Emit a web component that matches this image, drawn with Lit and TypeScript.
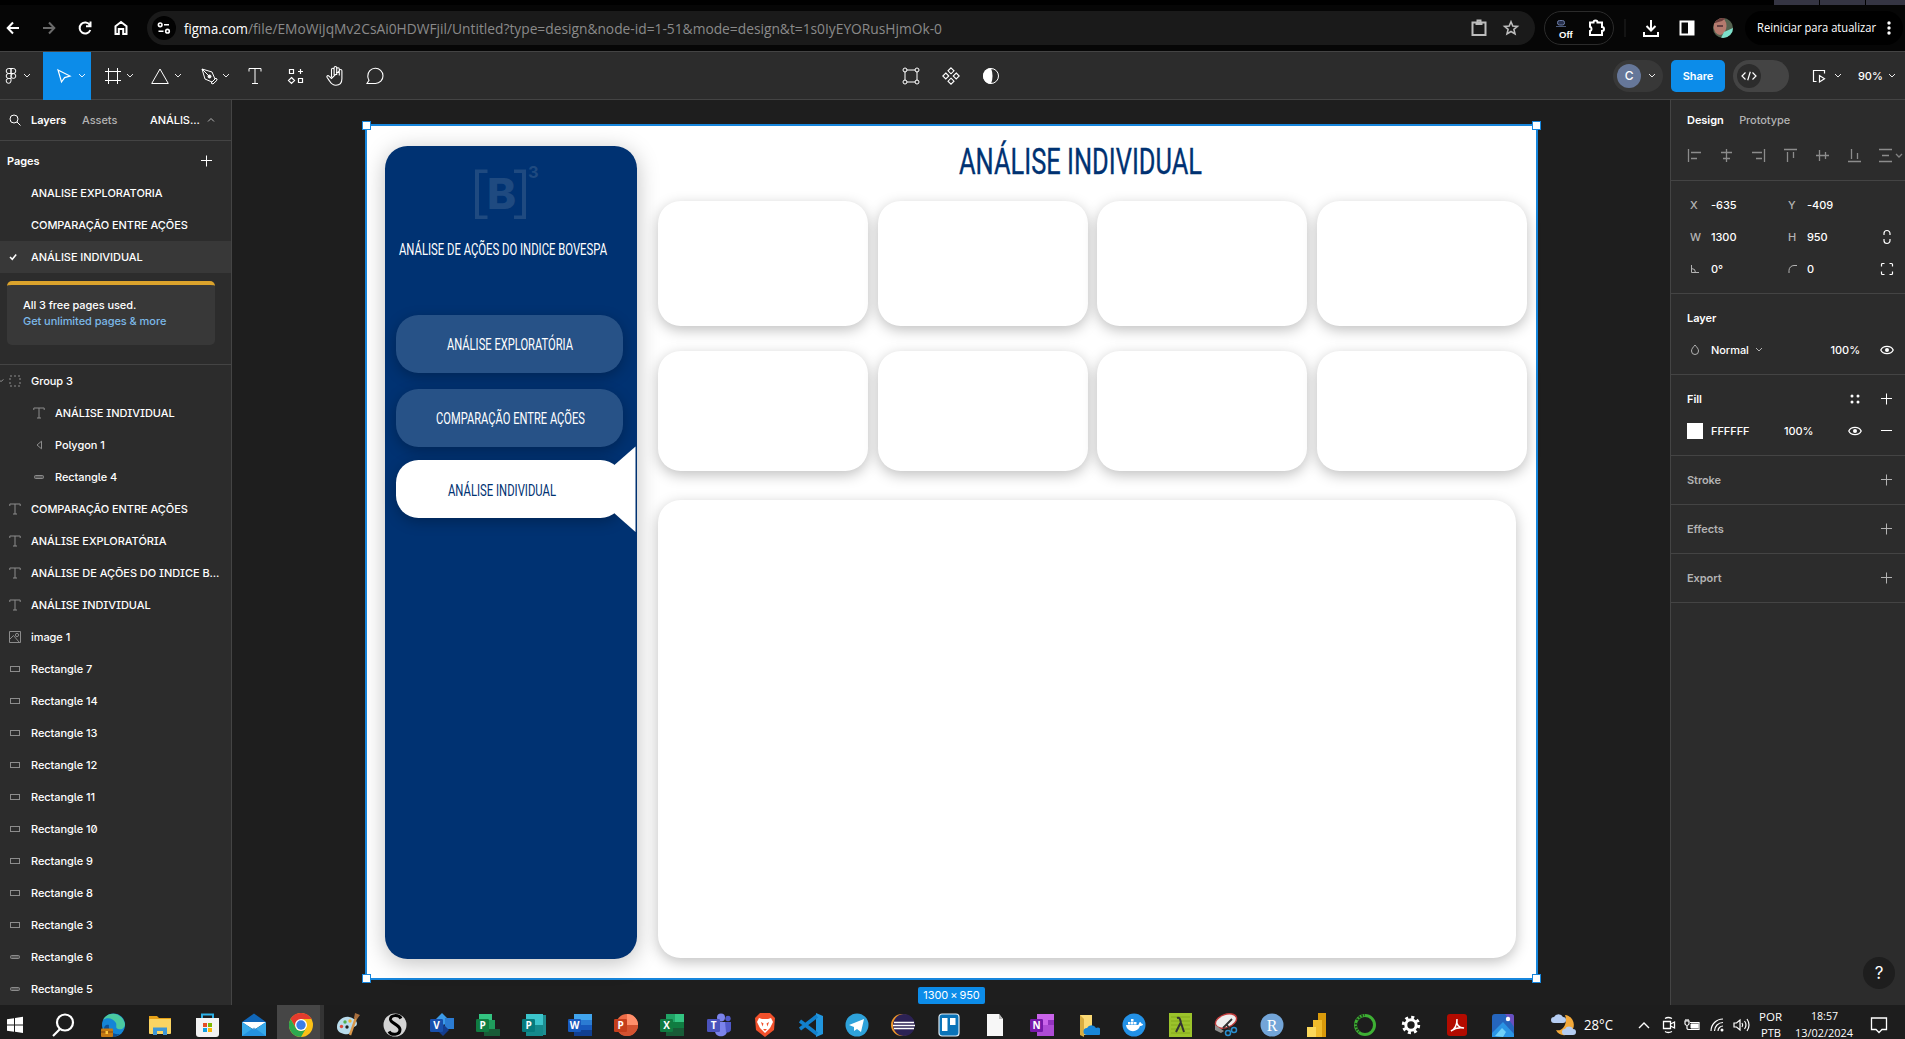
import { LitElement, html, svg, css } from "lit";
import { customElement } from "lit/decorators.js";

/* ---------- helpers ---------- */

/** Square line icon drawn on its own pixel grid. */
const icon = (w: number, h: number, body: unknown, cls = "ic") =>
  html`<svg class=${cls} width=${w} height=${h} viewBox="0 0 ${w} ${h}">${body}</svg>`;

/** Text set to an exact advance width. */
const fit = (text: string, width: number, size: number, cls: string, height = 24, base = 18) =>
  html`<svg class="fit ${cls}" width=${width} height=${height}>
    <text x="0" y=${base} font-size=${size} textLength=${width} lengthAdjust="spacingAndGlyphs">${text}</text>
  </svg>`;

const chevron = icon(8, 6, svg`<path d="M1 1l3 3 3-3"/>`, "ic chev");
const plus = icon(12, 12, svg`<path d="M5.500 .5v11M0 5.500h11"/>`);
const eye = icon(14, 10, svg`<path stroke-width="1.3" d="M.8 5C3 .2 11 .2 13.2 5 11 9.8 3 9.8.8 5z"/><circle cx="7" cy="5" r="2" fill="currentColor" stroke="none"/>`);

/* ---------- toolbar icons ---------- */

const tFigma = icon(12, 18, svg`<path d="M6 1.5H3.7a2.4 2.4 0 000 5H6zM6 1.5h2.3a2.4 2.4 0 010 5H6zM6 6.500H3.700a2.400 2.400 0 000 5H6zM3.700 11.500a2.400 2.400 0 102.300 2.400v-2.400z"/><circle cx="8.400" cy="9" r="2.400"/>`);
const tMove = icon(16, 18, svg`<path stroke-width="1.2" d="M2 3l12 6-5.400 1.600L5.500 15z"/>`);
const tFrame = icon(18, 18, svg`<path d="M4.500 1v16M13.500 1v16M1 4.500h16M1 13.500h16"/>`);
const tShape = icon(20, 18, svg`<path d="M10 2L18.300 16.500H1.700z"/>`);
const tPen = icon(18, 18, svg`<path d="M2 2l10 3 3 7-3 3-7-3zM2 2l7 7M11 16l5-5 1.200 2-4.200 4z"/><circle cx="9.500" cy="9.500" r="1.500" fill="currentColor"/>`);
const tText = icon(16, 18, svg`<path d="M2 4.500V1.500h12v3M8 1.500v15M5 16.500h6"/>`);
const tRes = icon(18, 18, svg`<path stroke-width="1.2" d="M3.500 2.500h4v4h-4zM12.500 11.500h4v4h-4zM14.500 2v5M12 4.500h5M5.500 10.500l3 3-3 3-3-3z"/>`);
const tHand = icon(20, 22, svg`<path stroke-width="1.1" d="M6.500 12V4.600a1.300 1.300 0 012.600 0V10M9.100 5V2.800a1.300 1.300 0 012.600 0V10M11.700 4a1.300 1.300 0 012.600 0v6.500M14.300 5.800a1.300 1.300 0 012.600 0v8c0 4-2.400 6.500-6 6.500-3.300 0-4.800-1.600-6.300-4.200L2 12.300c-.6-1.300.9-2.200 2-1.200l2.500 2.400z"/>`);
const tComment = icon(20, 18, svg`<path stroke-width="1.1" d="M2 16.500h8.500a7.600 7.600 0 10-7.700-7.300c0 1.700.4 2.800 1.200 4.100z"/>`);
const tEdit = icon(18, 18, svg`<path d="M4.500 3h9M4.500 15h9M3 4.500v9M15 4.500v9"/><circle cx="3" cy="3" r="2"/><circle cx="15" cy="3" r="2"/><circle cx="3" cy="15" r="2"/><circle cx="15" cy="15" r="2"/>`);
const tComp = icon(18, 18, svg`<path stroke-width="1.1" d="M9 .8l3 3-3 3-3-3zM9 11.200l3 3-3 3-3-3zM3.800 6l3 3-3 3-3-3zM14.200 6l3 3-3 3-3-3z"/>`);
const tMask = icon(18, 18, svg`<circle cx="9" cy="9" r="7.500"/><path d="M9 1a8 8 0 000 16c2-5 2-11 0-16z" fill="currentColor" stroke="none"/>`);

const tools: [unknown, boolean, boolean][] = [
  [tFigma, true, false], [tMove, true, true], [tFrame, true, false], [tShape, true, false], [tPen, true, false],
  [tText, false, false], [tRes, false, false], [tHand, false, false], [tComment, false, false],
];

/* ---------- layers ---------- */

const glyph: Record<string, unknown> = {
  group: icon(12, 12, svg`<path stroke-dasharray="2 2" d="M1 1h10v10H1z"/><path d="M-10.500 4.500l2.500 2 2.500-2"/>`),
  text: icon(12, 12, svg`<path d="M.8 3V1h10.400v2M6 1v10M4 11h4"/>`),
  poly: icon(12, 12, svg`<path d="M8.500 2.200v7.600L4 6z"/>`),
  thin: icon(12, 12, svg`<rect x="1.500" y="4.500" width="9" height="3" rx="1" fill="#555"/>`),
  rect: icon(12, 12, svg`<rect x="1.500" y="3.500" width="9" height="5"/>`),
  image: icon(12, 12, svg`<path d="M.5.5h11v11H.5zM1 8l3.500-3.500L10 11"/><circle cx="8" cy="4" r="1.600"/>`),
};
const layers: [string, string, boolean?][] = [
  ["group", "Group 3"], ["text", "ANÁLISE INDIVIDUAL", true], ["poly", "Polygon 1", true], ["thin", "Rectangle 4", true],
  ["text", "COMPARAÇÃO ENTRE AÇÕES"], ["text", "ANÁLISE EXPLORATÓRIA"], ["text", "ANÁLISE DE AÇÕES DO INDICE B..."],
  ["text", "ANÁLISE INDIVIDUAL"], ["image", "image 1"], ["rect", "Rectangle 7"], ["rect", "Rectangle 14"],
  ["rect", "Rectangle 13"], ["rect", "Rectangle 12"], ["rect", "Rectangle 11"], ["rect", "Rectangle 10"],
  ["rect", "Rectangle 9"], ["rect", "Rectangle 8"], ["rect", "Rectangle 3"], ["thin", "Rectangle 6"], ["thin", "Rectangle 5"],
];

/* ---------- align icons ---------- */
const aligns = [
  svg`<path d="M1.500 1v13M4 4.500h10M4 10.500h6" />`,
  svg`<path d="M7.500 1v13M2 4.500h11M4 10.500h7" />`,
  svg`<path d="M13.500 1v13M1 4.500h10M5 10.500h6" />`,
  svg`<path d="M1 1.500h13M4.500 4v10M10.500 4v6" />`,
  svg`<path d="M1 7.500h13M4.500 2v11M10.500 4v7" />`,
  svg`<path d="M1 13.500h13M4.500 1v10M10.500 5v6" />`,
];

/* ---------- taskbar icons, 24 x 24 ---------- */
const task = (body: unknown) => html`<svg width="24" height="24" viewBox="0 0 24 24">${body}</svg>`;
const tile = (letter: string, fill: string) => svg`<rect x="0" y="6" width="13" height="13" rx="1.200" fill=${fill}/>
  <text x="6.500" y="16" class="tl" font-size="10">${letter}</text>`;
const apps = [
  svg`<path fill="#fff" d="M4 6.200l7-1v6.300H4zM12 5l8-1.200v7.700h-8zM4 12.500h7v6.300l-7-1zM12 12.500h8V20l-8-1.200z"/>`,
  svg`<circle cx="14" cy="9.500" r="8" fill="none" stroke="#fff" stroke-width="2.200"/><path d="M9 16l-7 7" stroke="#fff" stroke-width="2.200"/>`,
  svg`<circle cx="12.500" cy="12" r="11.500" fill="#1485d6"/><path fill="#4ac9a0" d="M2 7C6-2 21-2 24 11c0 4-3 6-7 5-3-1-1-3-2-6C12 5 6 4 2 7z"/><path fill="#0c4f94" d="M8 12c-1 6 4 10 11 9-6 5-15 2-16-5 0-3 2-5 5-4z"/><rect x="0" y="15.500" width="12" height="8.500" rx="1" fill="#c47913"/><path d="M0 19h12" stroke="#7c4510"/><rect x="4.500" y="18" width="2.500" height="3" fill="#ffc83d"/>`,
  svg`<path fill="#e6a117" d="M1 3h8l2 2h12v5H1z"/><rect x="1" y="6" width="22" height="15" rx="1" fill="#fbd462"/><path fill="#3f97d6" d="M5 22v-7.500h14V22h-4v-4H9v4z"/>`,
  svg`<path d="M7 6V1.500h11V6" fill="none" stroke="#2cb1e8" stroke-width="2"/><path fill="#f3f3f3" d="M1 5h23v16a3 3 0 01-3 3H4a3 3 0 01-3-3z"/><path fill="#e44e25" d="M8 10h4v4H8z"/><path fill="#7db700" d="M13 10h4v4h-4z"/><path fill="#12a0e0" d="M8 15h4v4H8z"/><path fill="#fdb807" d="M13 15h4v4h-4z"/>`,
  svg`<path fill="#1066b8" d="M0 9L12 .5 24 9v4H0z"/><path fill="#fff" d="M0 9h24L12 17z"/><path fill="#37a9ea" d="M0 9l12 8 12-8v14H0z"/><path fill="#1d87d8" d="M0 23l12-8.500L24 23z" opacity=".7"/>`,
  svg`<circle cx="12" cy="12" r="12" fill="#fbc116"/><path fill="#e33b2e" d="M1.600 6A12 12 0 0122.400 6H12a6 6 0 00-5.300 3.300z"/><path fill="#e33b2e" d="M1.600 6l5.300 9L12 6z"/><path fill="#2da94f" d="M1.600 6A12 12 0 0012 24l5.200-9A6 6 0 016.800 15z"/><circle cx="12" cy="12" r="6" fill="#fff"/><circle cx="12" cy="12" r="4.700" fill="#3a7de8"/>`,
  svg`<path fill="#b9dcec" d="M1 14C1 8 7 3 13 4s10 6 7 9c-2 1-4 1-4 4s-4 5-8 4-7-3-7-7z"/><circle cx="5.500" cy="13.500" r="1.700" fill="#e0483c"/><circle cx="9" cy="9" r="1.700" fill="#53ae4d"/><circle cx="14" cy="8" r="1.700" fill="#f2b330"/><circle cx="11" cy="14" r="1.700" fill="#222"/><path d="M21 2l-7 20" stroke="#d9974b" stroke-width="2.400"/><path fill="#a8703f" d="M19 0l5 2-3 4-3-1z"/>`,
  svg`<circle cx="12" cy="12" r="11.500" fill="#d4d4d4"/><path d="M18 5.500c-2-4-11-4-10.500 1 .5 4 9 5 9.500 10 0 6-9 6-11 2" fill="none" stroke="#000" stroke-width="3"/>`,
  svg`<path fill="#3c9be8" d="M12 0l7 7-7 7-7-7z"/><path fill="#2b7cd3" d="M15 5h9v11h-9z"/><path fill="#143d8f" d="M13 11l6 6-6 6-6-6z"/>${tile("V", "#1850ad")}`,
  svg`<path fill="#33c481" d="M3 1h13v9H3z"/><path fill="#1f9d5c" d="M10 7h9v10h-9z"/><path fill="#185c37" d="M8 16h16v7H8z"/>${tile("P", "#107c41")}`,
  svg`<path fill="#1e8f92" d="M18 2h6v20h-6z"/><path fill="#3cc5cc" d="M4 1h17v11H4z"/><path fill="#148a8c" d="M4 12h17v11H4z"/>${tile("P", "#077b7d")}`,
  svg`<path fill="#41a5ee" d="M6 1h18v6H6z"/><path fill="#2b7cd3" d="M6 7h18v5H6z"/><path fill="#185abd" d="M6 12h18v5H6z"/><path fill="#103f91" d="M6 17h18v6H6z"/>${tile("W", "#185abd")}`,
  svg`<circle cx="13" cy="12" r="11" fill="#ed6c47"/><path fill="#ff8f6b" d="M13 1A11 11 0 0124 12H13z"/><path fill="#d35230" d="M2 12h22a11 11 0 01-22 0z"/>${tile("P", "#c43e1c")}`,
  svg`<path fill="#21a366" d="M6 1h9v8H6z"/><path fill="#33c481" d="M15 1h9v8h-9z"/><path fill="#107c41" d="M6 9h18v6H6z"/><path fill="#185c37" d="M6 15h18v8H6z"/>${tile("X", "#107c41")}`,
  svg`<circle cx="14" cy="4.500" r="4" fill="#7b83eb"/><circle cx="21" cy="5.500" r="2.700" fill="#5059c9"/><path fill="#7b83eb" d="M7 9h13v9c0 7-12 7-12 0z"/><path fill="#5059c9" d="M18 9h6v7c0 3-3 4-5 3z"/>${tile("T", "#4b53bc")}`,
  svg`<path fill="#f1502b" d="M7 0h10l5 5-1 12-9 7-9-7L2 5z"/><path fill="#fff" d="M6 5l3 1h6l3-1 2 4-3 6-5 5-5-5-3-6z"/><path fill="#f1502b" d="M8 9l2.500 1.500-1 3zM16 9l-2.500 1.500 1 3zM10 16h4l-2 2z"/>`,
  svg`<path fill="#2196de" d="M17 0l7 3v18l-7 3z"/><path fill="none" stroke="#1280cc" stroke-width="3.600" d="M1 8l17 13M1 16L18 3"/>`,
  svg`<circle cx="12" cy="12" r="11.500" fill="#2ea2da"/><path fill="#fff" d="M4 12l15-6-3 13-4-3-3 2v-4z"/>`,
  svg`<circle cx="11" cy="12" r="11" fill="#f0972a"/><circle cx="13" cy="12" r="11" fill="#2c2255"/><path d="M3 9.500h20M2 12.500h22M3 15.500h20" stroke="#fff" stroke-width="1.500"/>`,
  svg`<rect x="2" y="1" width="20" height="22" rx="3" fill="#0a73b8" stroke="#dcecf6" stroke-width="1.200"/><rect x="5" y="5" width="5.500" height="13" fill="#fff"/><rect x="13" y="5" width="5.500" height="7" fill="#fff"/>`,
  svg`<path fill="#f7f7f7" d="M4 1h12l4 5v17H4z"/><path fill="#b8b8b8" d="M16 1v5h4z"/>`,
  svg`<path fill="#ca64ea" d="M7 1h17v22H7z"/><path fill="#9332bf" d="M18 7h6v5h-6z"/><path fill="#ae4bd5" d="M7 12h12v11H7zM18 12h6v11h-6z"/>${tile("N", "#7719aa")}`,
  svg`<path fill="#fbd975" d="M4 2h12v20H4z"/><path fill="#d9ad41" d="M4 2l4 4v18l-4-2z"/><path fill="#1886d9" d="M11 22a3.500 3.500 0 010-7 5 5 0 019 0 3.500 3.500 0 013 7z"/>`,
  svg`<circle cx="12" cy="12" r="11.500" fill="#2391e6"/><path fill="#fff" d="M4 12h12c1 0 1-3 2-3s1 2 3 2c0 2-3 2-3 2-2 7-13 7-14-1z"/><path fill="#fff" d="M6 9h2.500v2.500H6zM9 9h2.500v2.500H9zM12 9h2.500v2.500H12zM9 6h2.500v2.500H9z"/>`,
  svg`<rect x="1" y="0" width="23" height="24" fill="#9bc32b"/><path d="M3 4h19M3 8h19M3 12h19M3 16h19M3 20h19" stroke="#84aa1c"/><path d="M9 5c3-1 3 1 4 5l3 9M12.500 10L8 19" fill="none" stroke="#333" stroke-width="2"/>`,
  svg`<ellipse cx="12" cy="8" rx="11" ry="6.500" fill="#eee" stroke="#c23b3b" stroke-width="1.400" transform="rotate(-20 12 8)"/><path fill="#8f8f8f" d="M1 12l9 6-3 2-6-3z"/><path d="M18 6L9 15M13 12l4 6" stroke="#333" stroke-width="1.800"/><circle cx="14" cy="20" r="2.500" fill="none" stroke="#2a8fd0" stroke-width="1.500"/><circle cx="20" cy="17" r="2.500" fill="none" stroke="#2a8fd0" stroke-width="1.500"/>`,
  svg`<circle cx="12" cy="12" r="11.500" fill="#73a5d8"/><text x="12" y="17.500" class="tl serif" font-size="16">R</text>`,
  svg`<path fill="#d99a0b" d="M12 0h8v24h-8z"/><path fill="#f0bb2b" d="M7 7h9v17H7z"/><path fill="#fbd85b" d="M1 14h9v10H1z"/>`,
  svg`<circle cx="12" cy="12" r="9.500" fill="none" stroke="#3eb034" stroke-width="3"/><path d="M4 7a10 10 0 018-5M3 10a10 10 0 003 9" fill="none" stroke="#1c3f18" stroke-width="2.500" stroke-dasharray="1.500 1.500"/>`,
  svg`<circle cx="12" cy="12" r="5.200" fill="none" stroke="#fff" stroke-width="3"/><circle cx="12" cy="12" r="7.700" fill="none" stroke="#fff" stroke-width="3" stroke-dasharray="3.020 3.020"/>`,
  svg`<rect x="2" y="1" width="20" height="22" rx="3" fill="#b30b00"/><path d="M6 18c4-2 6-6 6-12-1 6 2 9 7 9-5-1-9 0-13 3z" fill="none" stroke="#fff" stroke-width="1.500"/>`,
  svg`<rect x="1" y="1" width="22" height="23" rx="3" fill="#2565bd"/><path fill="#6a4fbf" d="M14 1h6a3 3 0 013 3v10z"/><path fill="#2a94e4" d="M1 20L12 9l11 12v3H1z"/><path fill="#6fd0f8" d="M4 23l7-8 4 4-3 5z"/><circle cx="17" cy="6" r="2.200" fill="#fff"/>`,
];

@customElement("app-root")
export class AppRoot extends LitElement {
  static styles = css`
    :host { display: block; width: 1905px; height: 1039px; overflow: hidden; background: #1e1e1e; color: #fff;
      font: 500 11px/16px Inter, "Liberation Sans", sans-serif; letter-spacing: -.06px; }
    * { box-sizing: border-box; }
    svg { display: block; flex: none; }
    .ic { fill: none; stroke: currentColor; stroke-width: 1; overflow: visible; }
    .chev { opacity: .9; }
    .fit { overflow: visible; }
    .fit text { fill: currentColor; }
    .page { display: flex; flex-direction: column; height: 1039px; }
    .row { display: flex; align-items: center; }
    .grow { flex: 1; }

    /* browser bar */
    .strip { height: 5px; background: #000; display: flex; justify-content: flex-end; gap: 1px; }
    .wtab { width: 45px; height: 5px; background: #353543; }
    .wtab.last { width: 39px; }
    .chrome { height: 46px; background: #060606; display: flex; align-items: center; }
    .nav { width: 36px; display: flex; justify-content: center; }
    .nav.first { margin-left: -5px; }
    .nav .ic, .addr .ic, .ext .ic { stroke-width: 2; }
    .dim { color: #6b6b6b; }
    .addr { width: 1388px; height: 34px; border-radius: 17px; background: #1a1a1a; margin-left: 8px; padding: 0 8px 0 5px; display: flex; align-items: center; }
    .site { width: 24px; height: 24px; border-radius: 12px; background: #020202; display: flex; align-items: center; justify-content: center; margin-right: 8px; }
    .seg { font-family: "Open Sans", "Noto Sans", sans-serif; font-weight: 400; letter-spacing: 0; }
    .path { color: #8a8a8a; }
    .cell32 { width: 32px; display: flex; justify-content: center; color: #bdbdbd; }
    .ext { width: 70px; height: 34px; margin-left: 9px; border: 1px solid #2b2b2b; border-radius: 17px; display: flex; align-items: center; padding-left: 11px; gap: 12px; }
    .off { width: 20px; height: 26px; font: 700 9.500px/12px "Liberation Sans", sans-serif; display: flex; flex-direction: column; align-items: flex-start; justify-content: space-between; padding-top: 5px; color: #fff; letter-spacing: 0; }
    .off svg { margin-bottom: 2px; }
    .off span { margin-left: 3px; }
    .sep { width: 2px; height: 18px; background: #141414; margin: 0 7px 0 10px; }
    .me { width: 20px; height: 20px; }
    .restart { width: 158px; height: 34px; border-radius: 17px; background: #000; margin-left: 4px; padding: 0 12px; display: flex; align-items: center; justify-content: space-between; }

    /* figma toolbar */
    .bar { height: 49px; border-top: 1px solid #444; border-bottom: 1px solid #444; background: #2c2c2c; display: flex; align-items: stretch; }
    .tool { width: 40px; height: 48px; display: flex; align-items: center; justify-content: center; }
    .tool.wide { width: 48px; justify-content: flex-end; gap: 4px; padding-right: 5px; }
    .tool.on { background: #0c8ce9; height: 48px; gap: 6px; }
    .tool.lead { margin-left: -5px; padding-right: 12px; gap: 6px; }
    .mid { display: flex; margin-left: 496px; }
    .right { display: flex; align-items: center; margin-left: auto; padding-right: 9px; }
    .user { width: 50px; height: 32px; border-radius: 16px; background: #383838; display: flex; align-items: center; padding-left: 4px; gap: 7px; }
    .ava { width: 24px; height: 24px; border-radius: 12px; background: #667799; text-align: center; font-size: 12px; line-height: 24px; }
    .share { width: 54px; height: 32px; border-radius: 5px; background: #0c8ce9; margin: 0 8px; font-weight: 600; text-align: center; line-height: 32px; }
    .toggle { width: 56px; height: 32px; border-radius: 16px; background: #444; padding: 4px; margin-right: 23px; }
    .knob { width: 24px; height: 24px; border-radius: 12px; background: #2c2c2c; display: flex; align-items: center; justify-content: center; }
    .present { gap: 8px; margin-right: 16px; }
    .zoom { width: 38px; justify-content: space-between; }

    /* body */
    .body { display: flex; height: 905px; }
    .left { width: 232px; border-right: 1px solid #444; background: #2c2c2c; }
    .tabs { height: 41px; border-bottom: 1px solid #444; padding-left: 9px; display: flex; align-items: center; font-weight: 600; }
    .muted { color: #b3b3b3; }
    .tabs .t1 { margin-left: 10px; width: 51px; }
    .tabs .t2 { width: 68px; font-weight: 500; }
    .tabs .t3 { width: 57px; font-weight: 500; }
    .pages { height: 224px; border-bottom: 1px solid #444; padding-top: 4px; }
    .phead { height: 32px; padding: 0 18px 0 7px; display: flex; align-items: center; justify-content: space-between; font-weight: 600; }
    .prow { height: 32px; display: flex; align-items: center; padding-left: 9px; }
    .prow.sel { background: #383838; }
    .tick { width: 22px; }
    .promo { margin: 8px 16px 0 7px; height: 64px; border-radius: 5px; border-top: 4px solid #dba32c; background: #383838; padding: 12px 16px; }
    .link { color: #7cb9e8; }
    .layer { height: 32px; display: flex; align-items: center; padding-left: 9px; gap: 10px; white-space: nowrap; font-feature-settings: "ss02"; }
    .layer.in { padding-left: 33px; }
    .layer .ic { color: #8c8c8c; }

    .canvas { width: 1438px; background: #1e1e1e; position: relative; padding: 24px 0 0 133px; }
    .art { width: 1173px; height: 856px; border: 2px solid #1786dc; background: #fff; position: relative; display: flex; }
    .h { position: absolute; width: 9px; height: 9px; background: #fff; border: 1.500px solid #1786dc; }
    .nw { left: -5px; top: -5px; } .ne { right: -5px; top: -5px; } .sw { left: -5px; bottom: -5px; } .se { right: -5px; bottom: -5px; }
    .size { position: absolute; left: 686px; top: 887px; width: 67px; height: 17px; border-radius: 2px; background: #0c8ce9; text-align: center; line-height: 17px; font-weight: 400; word-spacing: -1px; }
    .side { margin: 20px 0 0 18px; width: 252px; height: 812.500px; border-radius: 22.500px; background: #003272; box-shadow: 0 4px 22px rgba(0,0,0,.25); position: relative; }
    .logo { margin: 19px 0 0 89.500px; overflow: visible; }
    .logo text { font: 800 42px Inter, sans-serif; }
    .logo .sup { font: 700 16.500px Inter, sans-serif; }
    .osw { font-family: Roboto, "Liberation Sans Narrow", sans-serif; font-weight: 400; letter-spacing: 0; }
    .sub { margin: 17.500px 0 54px 13.500px; }
    .btn { position: relative; width: 227px; height: 58px; border-radius: 22.500px; background: #275287; margin: 0 0 16px 11px; padding-top: 17.500px; box-shadow: 0 4px 14px rgba(0,0,0,.25); }
    .b1 { padding-left: 51px; } .b2 { padding-left: 40px; margin-bottom: 13px; }
    .b3 { padding-left: 52px; background: #fff; color: #003272; padding-top: 18px; }
    .poly { position: absolute; left: 191px; top: -14px; }
    .main { margin-left: 21px; }
    .title { margin: 10px 0 0 300.500px; color: #003272; }
    .title text { stroke: #003272; stroke-width: .35px; }
    .grid { display: grid; grid-template-columns: repeat(4, 210px); gap: 9.600px; }
    .g1 { margin-top: 14.800px; } .g2 { margin-top: 25px; }
    .card { height: 125px; border-radius: 22.500px; background: #fff; box-shadow: 0 4px 14px rgba(0,0,0,.25); }
    .g2 .card { height: 120.700px; }
    .big { width: 858px; height: 458px; margin-top: 28.700px; }

    /* inspector */
    .insp { width: 235px; border-left: 1px solid #444; background: #2c2c2c; display: flex; flex-direction: column; }
    .itabs { height: 40px; padding-left: 16px; display: flex; align-items: center; gap: 15.500px; font-weight: 600; }
    .itabs .muted { font-weight: 500; }
    .al { height: 41px; padding: 0 0 9px 16px; border-bottom: 1px solid #444; display: flex; align-items: center; gap: 17px; color: #8c8c8c; }
    .al .ic path { stroke-width: 1.300; }
    .sec { border-bottom: 1px solid #444; padding: 8px 0; }
    .f { height: 32px; padding: 0 9px 0 16px; display: flex; align-items: center; }
    .lab { width: 24px; padding-left: 3px; color: #b3b3b3; display: flex; }
    .val { width: 77px; }
    .val.hex { width: 73px; }
    .lab.b { width: 19px; padding-left: 0; }
    .end { margin-left: auto; width: 18px; display: flex; justify-content: center; }
    .end + .end { margin-left: 14px; }
    .end.pct { width: auto; }
    .end.pct + .end { margin-left: 18px; }
    .hd { font-weight: 600; }
    .sw2 { width: 16px; height: 16px; background: #fff; margin-right: 8px; }
    .help { margin: auto 10px 16px auto; width: 32px; height: 32px; border-radius: 16px; background: #1e1e1e; font: 400 17px/32px Inter, sans-serif; text-align: center; }

    /* taskbar */
    .task { height: 34px; background: #1d1d1d; display: grid; grid-template-columns: 38px 50px 49px 46px 47px 47px 47px 47px 47.700px repeat(24, 46.150px) 1fr; grid-template-rows: 34px; overflow: hidden; }
    .app { display: flex; justify-content: center; padding-top: 8px; height: 34px; }
    .app.start { justify-content: flex-start; padding-left: 3px; }
    .app.cur { background: linear-gradient(90deg, #464646 43px, #343434 43px); }
    .app svg { height: 24px; }
    .tl { fill: #fff; text-anchor: middle; font-weight: 700; font-family: "Open Sans", sans-serif; }
    .serif { font-family: "Liberation Serif", serif; font-weight: 400; }
    .tray { display: flex; align-items: center; height: 34px; padding: 6px 0 0 25px; }
    .g7 { margin-left: 7px; } .g8 { margin-left: 8px; } .g9 { margin-left: 9px; } .g12 { margin-left: 12px; }
    .g13 { margin-left: 13px; } .g17 { margin-left: 17px; } .g25 { margin-left: 25px; }
    .two { display: flex; flex-direction: column; align-items: center; gap: 0; height: 33px; flex: none; }
  `;

  private card = () => html`<div class="card"></div>`;

  render() {
    return html`<div class="page">
      <div class="strip"><div class="wtab"></div><div class="wtab"></div><div class="wtab last"></div></div>
      <div class="chrome">
        <div class="nav first">${icon(14, 14, svg`<path d="M13 7H2M7 1.500L1.700 7 7 12.500"/>`)}</div>
        <div class="nav dim">${icon(14, 14, svg`<path d="M1 7h11M7 1.500L12.300 7 7 12.500"/>`)}</div>
        <div class="nav">${icon(14, 14, svg`<path d="M11.800 4A5.500 5.500 0 1012.300 9M12.500.5v4.700H8"/>`)}</div>
        <div class="nav">${icon(14, 16, svg`<path d="M1.500 6.200L7 2l5.500 4.200V14H9.200V9H4.800v5H1.500z"/>`)}</div>
        <div class="addr">
          <div class="site">${icon(14, 12, svg`<g stroke-width="1.600"><circle cx="3.200" cy="2.800" r="1.800"/><path d="M7 2.800h5M1.500 9.200h5"/><circle cx="10.500" cy="9.200" r="1.800"/></g>`)}</div>
          ${fit("figma.com", 64, 14, "seg")}
          ${fit("/file/EMoWiJqMv2CsAi0HDWFjil/Untitled?type=design&node-id=1-51&mode=design&t=1s0IyEYORusHjmOk-0", 694, 14, "seg path")}
          <div class="grow"></div>
          <div class="cell32">${icon(16, 18, svg`<path d="M1.500 3.500h13v12.500h-13z"/><path d="M4.500 3h7v3h-7z" fill="currentColor" stroke="none"/><path d="M6.500 3V1.500h3V3"/>`)}</div>
          <div class="cell32">${icon(16, 16, svg`<path stroke-width="1.600" d="M8 1.800l1.800 4.200 4.600.4-3.500 3 1.100 4.500L8 11.500 4 13.900l1.100-4.500-3.500-3 4.600-.4z"/>`)}</div>
        </div>
        <div class="ext">
          <div class="off"><svg width="10" height="7" viewBox="0 0 10 7"><rect x="1.500" y=".5" width="7" height="4.500" rx="2" fill="#27304c" stroke="#6f7fa8"/><path d="M0 6.500h10" stroke="#4a5878"/></svg><span>Off</span></div>
          ${icon(18, 18, svg`<path d="M2 3.500h3.500a2 2 0 014 0H14V8a2 2 0 010 4v4H2v-4a2.200 2.200 0 000-4.200z"/>`)}
        </div>
        <div class="sep"></div>
        <div class="nav">${icon(16, 17, svg`<path d="M8 0v10M3.500 6L8 10.500 12.500 6M1 12v4h14v-4"/>`)}</div>
        <div class="nav">${icon(16, 16, svg`<path d="M1.500 1.500h13v13h-13z"/><path d="M9 1h6v14H9z" fill="currentColor" stroke="none"/>`)}</div>
        <div class="nav"><svg class="me" viewBox="0 0 20 20"><clipPath id="c"><circle cx="10" cy="10" r="10"/></clipPath><g clip-path="url(#c)"><rect width="20" height="20" fill="#54624f"/><ellipse cx="7" cy="8" rx="6.500" ry="9" fill="#b57a6e"/><path fill="#6b3d3b" d="M0 0h13L9 3 2 5z"/><path fill="#7ce0cb" d="M8 20l3-6 9-4v10z"/><path d="M4 8h6" stroke="#4a2e35" stroke-width="1.500"/></g></svg></div>
        <div class="restart">${fit("Reiniciar para atualizar", 119, 12.5, "seg", 20, 14)}${icon(4, 16, svg`<g fill="currentColor" stroke="none"><circle cx="2" cy="3" r="1.700"/><circle cx="2" cy="8" r="1.700"/><circle cx="2" cy="13" r="1.700"/></g>`)}</div>
      </div>

      <div class="bar">
        ${tools.map(([g, wide, on], i) => html`<div class="tool ${wide ? "wide" : ""} ${on ? "on" : ""} ${i === 0 ? "lead" : ""}">${g}${wide ? chevron : ""}</div>`)}
        <div class="mid"><div class="tool">${tEdit}</div><div class="tool">${tComp}</div><div class="tool">${tMask}</div></div>
        <div class="right">
          <div class="user"><div class="ava">C</div>${chevron}</div>
          <div class="share">Share</div>
          <div class="toggle"><div class="knob">${icon(16, 10, svg`<path stroke-width="1.200" d="M4.500 1.500L1 5l3.500 3.500M11.500 1.500L15 5l-3.500 3.500M9.300.8L6.700 9.200"/>`)}</div></div>
          <div class="row present">${icon(14, 14, svg`<path stroke-width="1.200" d="M4.500 12.500h-3v-11h11v3M7.500 6.500v6.500l5-3.250z"/>`)}${chevron}</div>
          <div class="row zoom"><span>90%</span>${chevron}</div>
        </div>
      </div>

      <div class="body">
        <div class="left">
          <div class="tabs">
            ${icon(12, 12, svg`<circle cx="5" cy="5" r="4"/><path d="M8 8l3.500 3.500"/>`)}
            <span class="t1">Layers</span><span class="t2 muted">Assets</span><span class="t3">ANÁLIS...</span>
            ${icon(8, 6, svg`<path d="M1 4.500l3-3 3 3"/>`, "ic muted")}
          </div>
          <div class="pages">
            <div class="phead"><span>Pages</span>${plus}</div>
            <div class="prow"><span class="tick"></span>ANALISE EXPLORATORIA</div>
            <div class="prow"><span class="tick"></span>COMPARAÇÃO ENTRE AÇÕES</div>
            <div class="prow sel"><span class="tick">${icon(8, 8, svg`<path stroke-width="1.500" d="M1 4l2.300 2.300L7.200 1.500"/>`)}</span>ANÁLISE INDIVIDUAL</div>
            <div class="promo"><div>All 3 free pages used.</div><div class="link">Get unlimited pages &amp; more</div></div>
          </div>
          ${layers.map(([g, name, inner]) => html`<div class="layer ${inner ? "in" : ""}">${glyph[g]}<span>${name}</span></div>`)}
        </div>

        <div class="canvas">
          <div class="art">
            <div class="side">
              <svg class="logo" width="64" height="54" fill="#1f4a80">
                <path d="M0 4.500h12.500V8H4v42.500h8.500V54H0zM51 4.500H39V8h8v42.500h-8V54h12z"/>
                <text x="12" y="44" textLength="29" lengthAdjust="spacingAndGlyphs">B</text><text class="sup" x="53" y="12.500">3</text>
              </svg>
              <div class="sub">${fit("ANÁLISE DE AÇÕES DO INDICE BOVESPA", 208, 17, "osw")}</div>
              <div class="btn b1">${fit("ANÁLISE EXPLORATÓRIA", 126, 17, "osw")}</div>
              <div class="btn b2">${fit("COMPARAÇÃO ENTRE AÇÕES", 149, 17, "osw")}</div>
              <div class="btn b3"><svg class="poly" width="50" height="87"><path fill="#fff" d="M48.500.5V86L0 43z"/></svg>${fit("ANÁLISE INDIVIDUAL", 108, 17, "osw")}</div>
            </div>
            <div class="main">
              ${fit("ANÁLISE INDIVIDUAL", 243, 36.5, "osw title", 50, 38)}
              <div class="grid g1">${[0, 1, 2, 3].map(this.card)}</div>
              <div class="grid g2">${[0, 1, 2, 3].map(this.card)}</div>
              <div class="card big"></div>
            </div>
            <i class="h nw"></i><i class="h ne"></i><i class="h sw"></i><i class="h se"></i>
          </div>
          <div class="size">1300 × 950</div>
        </div>

        <div class="insp">
          <div class="itabs"><span>Design</span><span class="muted">Prototype</span></div>
          <div class="al">
            ${aligns.map((a) => icon(15, 15, a))}
            <span class="row">${icon(13, 15, svg`<path d="M0 1.500h13M3 7.500h7M0 13.500h13"/>`)}&nbsp;${chevron}</span>
          </div>
          <div class="sec">
            <div class="f"><span class="lab">X</span><span class="val">-635</span><span class="lab b">Y</span><span>-409</span></div>
            <div class="f"><span class="lab">W</span><span class="val">1300</span><span class="lab b">H</span><span>950</span><span class="end">${icon(8, 16, svg`<path stroke-width="1.200" d="M1 6V4.500a3 3 0 016 0V6M1 10v1.500a3 3 0 006 0V10"/>`)}</span></div>
            <div class="f"><span class="lab">${icon(10, 10, svg`<path d="M1.500 1v7.500H9M1.500 4.500a4 4 0 014 4"/>`)}</span><span class="val">0°</span><span class="lab b">${icon(10, 10, svg`<path d="M1 9V6.500a5 5 0 015-5h3"/>`)}</span><span>0</span><span class="end">${icon(14, 14, svg`<path stroke-width="1.200" d="M1.500 4.500v-2a1 1 0 011-1h2M9.500 1.500h2a1 1 0 011 1v2M12.500 9.500v2a1 1 0 01-1 1h-2M4.500 12.500h-2a1 1 0 01-1-1v-2"/>`)}</span></div>
          </div>
          <div class="sec">
            <div class="f hd">Layer</div>
            <div class="f"><span class="lab">${icon(10, 12, svg`<path d="M5 1c2 2.500 3.500 3.800 3.500 6a3.500 3.500 0 01-7 0C1.500 4.800 3 3.500 5 1z"/>`)}</span><span>Normal</span>&nbsp;&nbsp;${icon(8, 6, svg`<path d="M1 1l3 3 3-3"/>`, "ic muted")}<span class="end pct">100%</span><span class="end">${eye}</span></div>
          </div>
          <div class="sec">
            <div class="f hd">Fill<span class="end">${icon(10, 10, svg`<g fill="currentColor" stroke="none"><circle cx="2" cy="2" r="1.500"/><circle cx="8" cy="2" r="1.500"/><circle cx="2" cy="8" r="1.500"/><circle cx="8" cy="8" r="1.500"/></g>`)}</span><span class="end">${plus}</span></div>
            <div class="f"><i class="sw2"></i><span class="val hex">FFFFFF</span><span>100%</span><span class="end">${eye}</span><span class="end">${icon(12, 12, svg`<path d="M0 5.500h11"/>`)}</span></div>
          </div>
          ${["Stroke", "Effects", "Export"].map((n) => html`<div class="sec"><div class="f hd muted">${n}<span class="end">${plus}</span></div></div>`)}
          <div class="help">?</div>
        </div>
      </div>

      <div class="task">
        ${apps.map((a, i) => html`<div class="app ${i === 0 ? "start" : ""} ${i === 6 ? "cur" : ""}">${task(a)}</div>`)}
        <div class="tray">
          <svg width="26" height="24" viewBox="0 0 26 24"><path fill="#f3a93a" d="M14 2c9 1 12 12 5 18-5 4-12 2-14-3 7 2 12-7 9-15z"/><path fill="#b5cdf2" d="M3 10a3 3 0 010-6 5 5 0 019 0 3 3 0 010 6zM14 22a3 3 0 010-6 4.500 4.500 0 018 0 3 3 0 010 6z"/></svg>
          <span class="g7">${fit("28°C", 29, 14.5, "seg", 20, 15)}</span>
          <span class="g25">${icon(12, 8, svg`<path stroke-width="1.400" d="M1 7l5-5 5 5"/>`)}</span>
          <span class="g12">${icon(14, 18, svg`<path stroke-width="1.300" d="M1.500 5.500h7v7h-7zM8.500 8l4-2v6l-4-2M3 2.500q3-2 7 0M3 15.500q3 2 7 0"/>`)}</span>
          <span class="g8">${icon(17, 14, svg`<path stroke-width="1.200" d="M6 4.500h9v7H5M3 8v2.500q0 1 2 1M1 3h4v3q-2 3-4 0zM2 3V1M4 3V1"/><path fill="currentColor" d="M7 6h7v4H7z"/>`)}</span>
          <span class="g9">${icon(14, 14, svg`<path stroke-width="1.200" d="M1 13A12 12 0 0113 1M4.500 13A8.500 8.500 0 0113 4.500M8 13A5 5 0 0113 8"/><circle cx="12" cy="12" r="1.500" fill="currentColor" stroke="none"/>`)}</span>
          <span class="g9">${icon(17, 14, svg`<path stroke-width="1.200" d="M1 5h2.500L7 2v10L3.500 9H1zM9 5q1.500 2 0 4M11.500 3q3 4 0 8M14 1q4 6 0 12"/>`)}</span>
          <span class="two g9">${fit("POR", 23, 11.5, "seg", 16, 12)}${fit("PTB", 20, 11.5, "seg", 16, 12)}</span>
          <span class="two g13">${fit("18:57", 27, 11.5, "seg", 16, 11)}${fit("13/02/2024", 58, 11.5, "seg", 16, 12)}</span>
          <span class="g17">${icon(18, 18, svg`<path stroke-width="1.300" d="M1.500 2h15v11.500H12L9 16.500l-3-3H1.500z"/>`)}</span>
        </div>
      </div>
    </div>`;
  }
}
